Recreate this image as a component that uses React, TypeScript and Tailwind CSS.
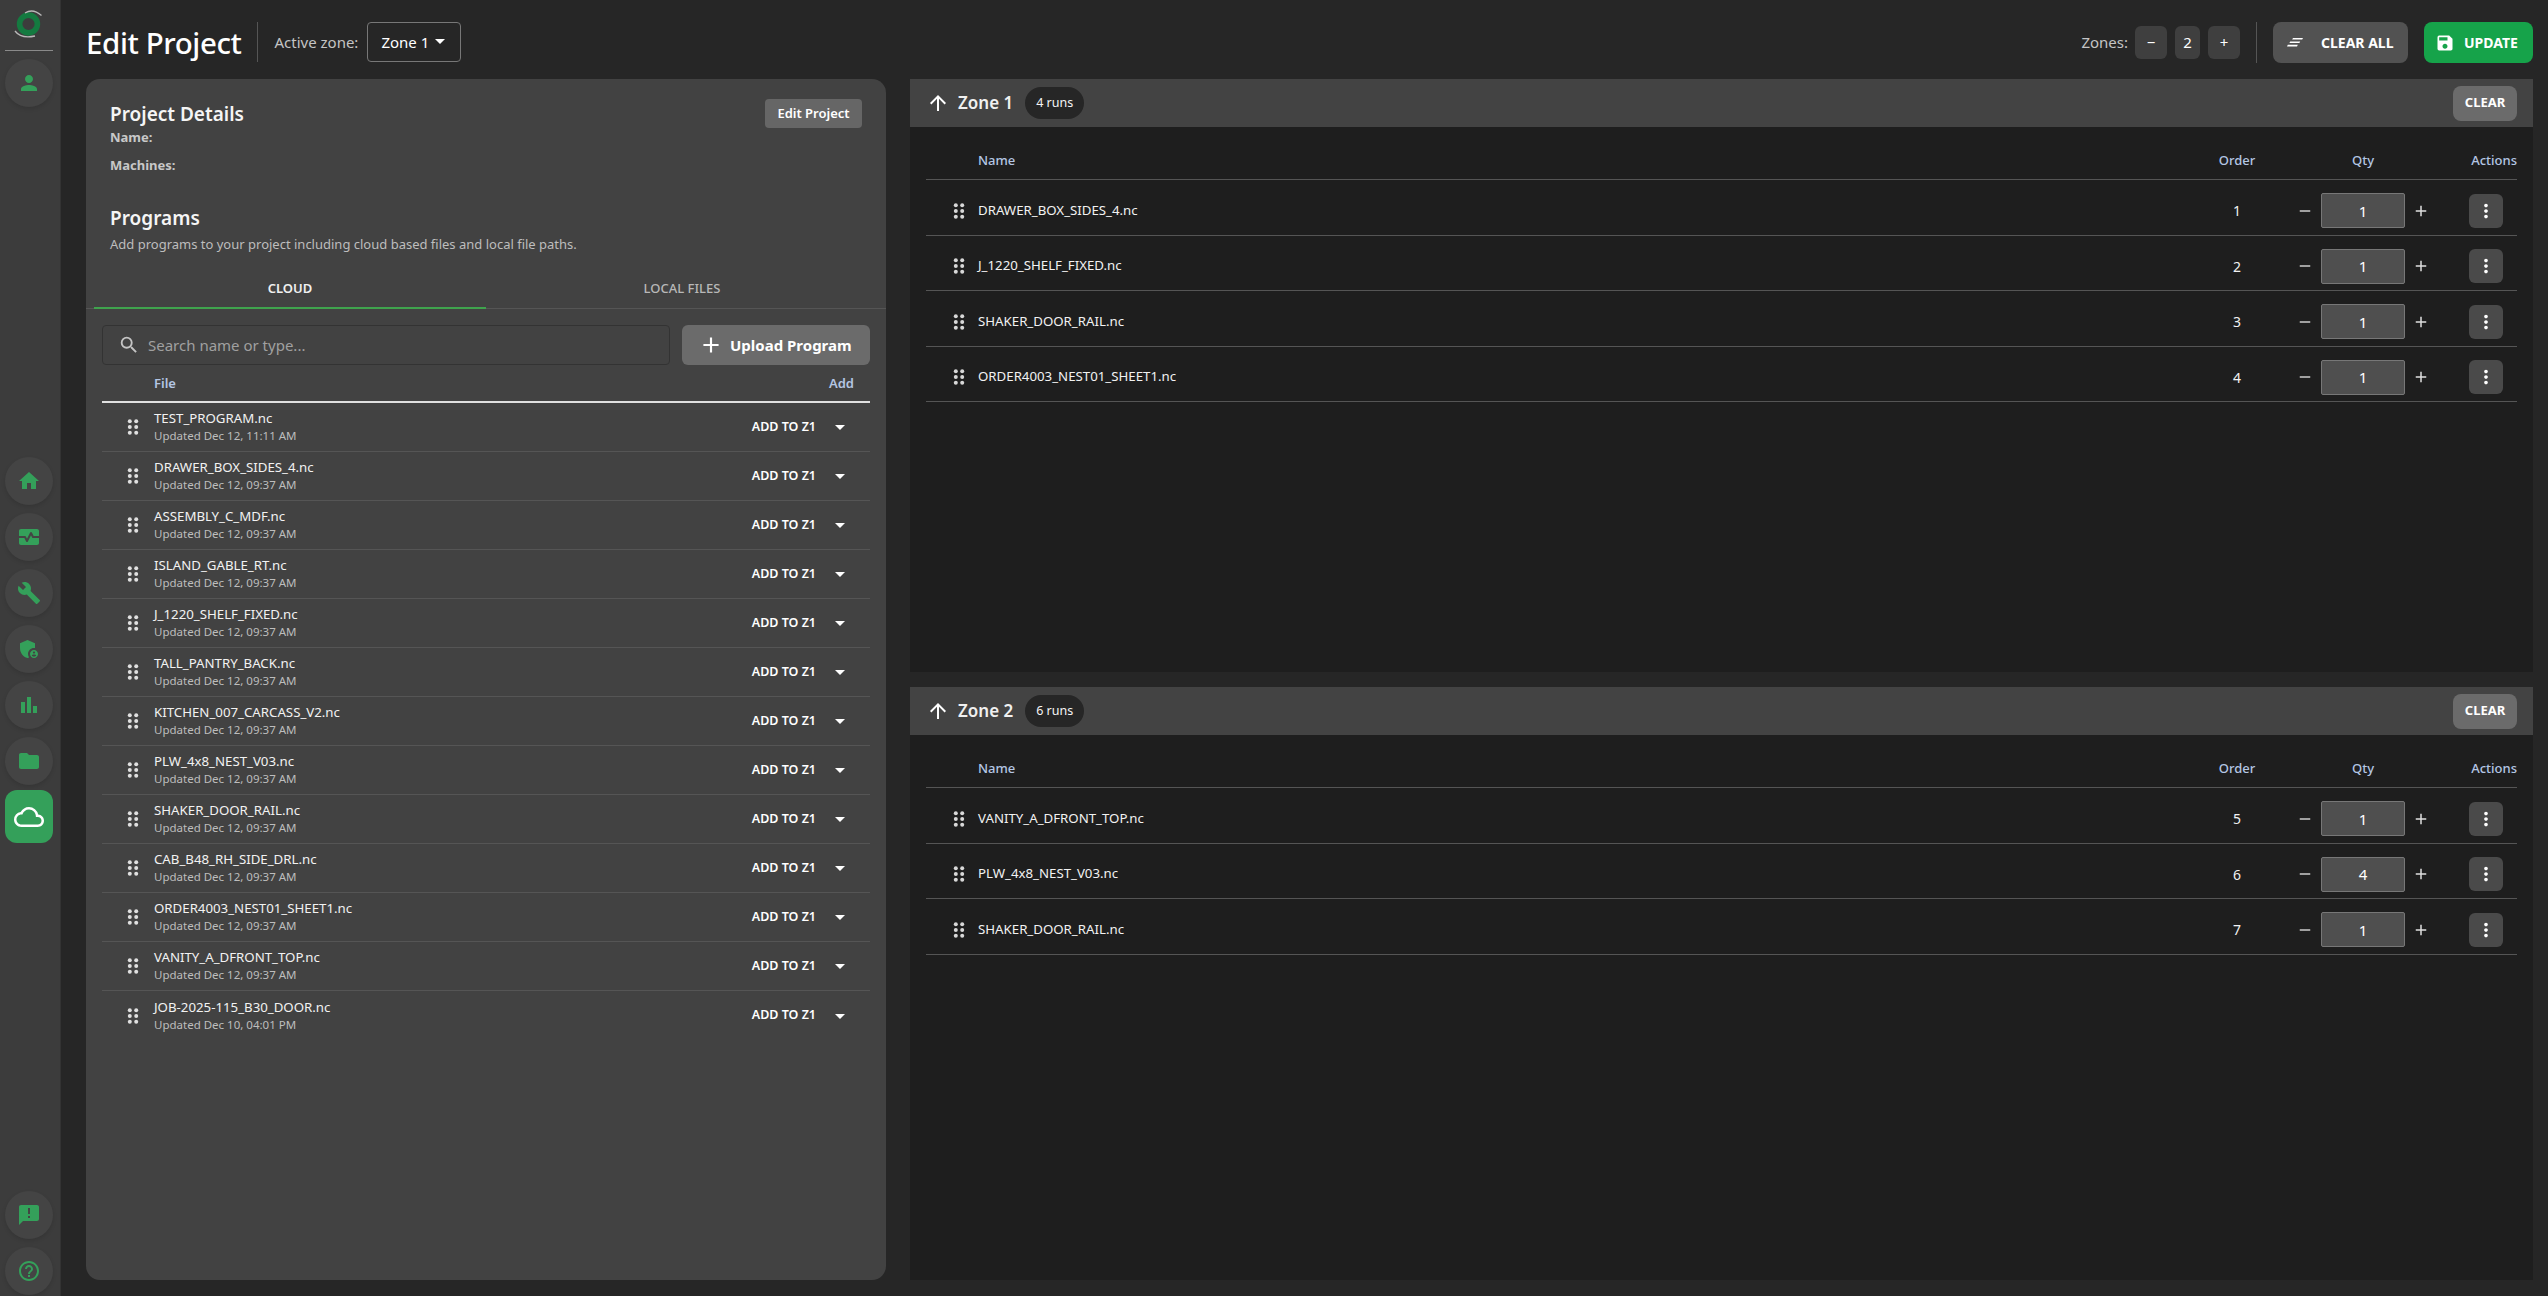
import {
  MdAdd,
  MdAdminPanelSettings,
  MdArrowDropDown,
  MdArrowUpward,
  MdBarChart,
  MdBuild,
  MdCloudQueue,
  MdFolder,
  MdHelpOutline,
  MdHome,
  MdAnnouncement,
  MdMonitorHeart,
  MdMoreVert,
  MdPerson,
  MdRemove,
  MdSave,
  MdSearch,
} from "react-icons/md"
import type { IconType } from "react-icons"

const files = [
  ["TEST_PROGRAM.nc", "Updated Dec 12, 11:11 AM"],
  ["DRAWER_BOX_SIDES_4.nc", "Updated Dec 12, 09:37 AM"],
  ["ASSEMBLY_C_MDF.nc", "Updated Dec 12, 09:37 AM"],
  ["ISLAND_GABLE_RT.nc", "Updated Dec 12, 09:37 AM"],
  ["J_1220_SHELF_FIXED.nc", "Updated Dec 12, 09:37 AM"],
  ["TALL_PANTRY_BACK.nc", "Updated Dec 12, 09:37 AM"],
  ["KITCHEN_007_CARCASS_V2.nc", "Updated Dec 12, 09:37 AM"],
  ["PLW_4x8_NEST_V03.nc", "Updated Dec 12, 09:37 AM"],
  ["SHAKER_DOOR_RAIL.nc", "Updated Dec 12, 09:37 AM"],
  ["CAB_B48_RH_SIDE_DRL.nc", "Updated Dec 12, 09:37 AM"],
  ["ORDER4003_NEST01_SHEET1.nc", "Updated Dec 12, 09:37 AM"],
  ["VANITY_A_DFRONT_TOP.nc", "Updated Dec 12, 09:37 AM"],
  ["JOB-2025-115_B30_DOOR.nc", "Updated Dec 10, 04:01 PM"],
]

const zones = [
  {
    name: "Zone 1",
    runs: "4 runs",
    rows: [
      { name: "DRAWER_BOX_SIDES_4.nc", order: 1, qty: 1 },
      { name: "J_1220_SHELF_FIXED.nc", order: 2, qty: 1 },
      { name: "SHAKER_DOOR_RAIL.nc", order: 3, qty: 1 },
      { name: "ORDER4003_NEST01_SHEET1.nc", order: 4, qty: 1 },
    ],
  },
  {
    name: "Zone 2",
    runs: "6 runs",
    rows: [
      { name: "VANITY_A_DFRONT_TOP.nc", order: 5, qty: 1 },
      { name: "PLW_4x8_NEST_V03.nc", order: 6, qty: 4 },
      { name: "SHAKER_DOOR_RAIL.nc", order: 7, qty: 1 },
    ],
  },
]

const navIcons: IconType[] = [MdHome, MdMonitorHeart, MdBuild, MdAdminPanelSettings, MdBarChart, MdFolder]

function Grip({ className = "" }: { className?: string }) {
  return (
    <svg width="12" height="16" viewBox="0 0 12 16" className={className} fill="currentColor">
      <circle cx="2.8" cy="2.3" r="2" />
      <circle cx="9.2" cy="2.3" r="2" />
      <circle cx="2.8" cy="8" r="2" />
      <circle cx="9.2" cy="8" r="2" />
      <circle cx="2.8" cy="13.7" r="2" />
      <circle cx="9.2" cy="13.7" r="2" />
    </svg>
  )
}

function Logo() {
  return (
    <svg width="30" height="32" viewBox="0 0 30 32" fill="none">
      <circle cx="14.5" cy="16" r="8.9" stroke="#147a40" strokeWidth="5.6" />
      <path d="M11 5 Q19 0 27.5 7.5" stroke="#b8b8b8" strokeWidth="1.3" />
      <path d="M1 23 Q7 31 21 28" stroke="#b8b8b8" strokeWidth="1.3" />
    </svg>
  )
}

function SweepIcon() {
  return (
    <svg width="16" height="9" viewBox="0 0 16 9" fill="currentColor">
      <path d="M6 0h10l-.8 1.6H5.2z" />
      <path d="M3.2 3.4h10l-.8 1.6h-10z" />
      <path d="M.8 6.8h10L10 8.4H0z" />
    </svg>
  )
}

function NavButton({ icon: Icon, size = 24 }: { icon: IconType; size?: number }) {
  return (
    <div className="w-[48px] h-[48px] rounded-full bg-[#444444] flex items-center justify-center text-[#34a05a] shadow-[0_2px_4px_rgba(0,0,0,0.12)]">
      <Icon size={size} />
    </div>
  )
}

function Sidebar() {
  return (
    <aside className="w-[61px] shrink-0 h-full bg-[#3c3c3c] border-r border-[#333333] flex flex-col items-center pr-[2px]">
      <div className="h-[51px] w-[48px] border-b border-[#8a8a8a] flex items-center justify-center pb-[2px]">
        <Logo />
      </div>
      <div className="mt-[8px]">
        <NavButton icon={MdPerson} />
      </div>
      <div className="mt-[350px] flex flex-col gap-[8px]">
        {navIcons.map((icon, i) => (
          <NavButton key={i} icon={icon} />
        ))}
        <div className="w-[48px] h-[53px] -mt-[3px] rounded-[12px] bg-[#34a05a] flex items-center justify-center text-white">
          <MdCloudQueue size={30} />
        </div>
      </div>
      <div className="mt-auto flex flex-col gap-[8px] pb-[1px]">
        <NavButton icon={MdAnnouncement} />
        <NavButton icon={MdHelpOutline} />
      </div>
    </aside>
  )
}

function Header() {
  return (
    <header className="h-[79px] shrink-0 flex items-start pt-[22px]">
      <h1 className="text-[29.5px] leading-[42px] font-medium text-white tracking-[-0.4px]">Edit Project</h1>
      <div className="w-px h-[40px] bg-[#555555] ml-[16px]" />
      <span className="ml-[16px] text-[15px] leading-[40px] text-[#c4c4c4]">Active zone:</span>
      <div className="ml-[9px] w-[94px] h-[40px] border border-[#777777] rounded-[4px] flex items-center pl-[13px] text-[15px] text-white">
        Zone 1
        <MdArrowDropDown size={24} className="-ml-px -mt-[2px]" />
      </div>
      <div className="ml-auto flex items-center h-[41px]">
        <span className="text-[15px] text-[#c4c4c4] mr-[7px]">Zones:</span>
        <div className="w-[32px] h-[33px] rounded-[6px] bg-[#3f3f3f] flex items-center justify-center text-[15px] text-white">−</div>
        <div className="ml-[8px] w-[25px] h-[33px] rounded-[6px] bg-[#3f3f3f] flex items-center justify-center text-[15px] text-white">2</div>
        <div className="ml-[8px] w-[32px] h-[33px] rounded-[6px] bg-[#3f3f3f] flex items-center justify-center text-[15px] text-white">+</div>
        <div className="w-px h-[41px] bg-[#555555] ml-[16px]" />
        <div className="ml-[16px] w-[135px] h-[41px] rounded-[8px] bg-[#525252] flex items-center pl-[14px] text-[14px] font-bold text-white">
          <SweepIcon />
          <span className="ml-[18px]">CLEAR ALL</span>
        </div>
        <div className="ml-[16px] w-[109px] h-[41px] rounded-[8px] bg-[#16a34a] flex items-center pl-[11px] text-[14px] font-bold text-white">
          <MdSave size={20} />
          <span className="ml-[9px]">UPDATE</span>
        </div>
      </div>
    </header>
  )
}

function ProjectPanel() {
  return (
    <section className="w-[800px] shrink-0 h-full rounded-[14px] bg-[#424242] flex flex-col">
      <div className="px-[24px] pt-[20px] relative">
        <h2 className="text-[19px] leading-[30px] font-semibold text-[#f5f5f5]">Project Details</h2>
        <div className="text-[13px] leading-[16px] font-bold text-[#c8c8c8]">Name:</div>
        <div className="mt-[12px] text-[13px] leading-[16px] font-bold text-[#c8c8c8]">Machines:</div>
        <div className="absolute right-[24px] top-[20px] w-[97px] h-[29px] rounded-[4px] bg-[#666666] flex items-center justify-center text-[13px] font-semibold text-white">
          Edit Project
        </div>
        <h2 className="mt-[30px] text-[19px] leading-[30px] font-semibold text-[#f5f5f5]">Programs</h2>
        <p className="mt-[2px] text-[13px] leading-[18px] text-[#bdbdbd]">
          Add programs to your project including cloud based files and local file paths.
        </p>
      </div>
      <div className="mt-[19px] flex px-[8px] border-b border-[#555555] text-[13px] font-semibold">
        <div className="w-[392px] h-[37px] flex items-center justify-center text-[#f0f0f0] border-b-2 border-[#3fa34d] -mb-px pb-[2px]">CLOUD</div>
        <div className="w-[392px] h-[36px] flex items-center justify-center text-[#b8b8b8] font-medium pb-[2px]">LOCAL FILES</div>
      </div>
      <div className="px-[16px] pt-[16px]">
        <div className="flex gap-[12px]">
          <div className="flex-1 h-[40px] rounded-[4px] border border-[#333333] flex items-center pl-[15px] text-[#a0a0a0] text-[15px]">
            <MdSearch size={22} className="text-[#c4c4c4]" />
            <span className="ml-[8px]">Search name or type...</span>
          </div>
          <div className="w-[188px] h-[40px] rounded-[6px] bg-[#6b6b6b] flex items-center pl-[16px] text-[15px] font-bold text-white">
            <MdAdd size={26} />
            <span className="ml-[6px]">Upload Program</span>
          </div>
        </div>
        <div className="h-[38px] pt-[2px] flex items-center justify-between border-b-2 border-[#e0e0e0] px-[52px] pr-[16px] text-[13px] font-semibold text-[#b4c6e4]">
          <span>File</span>
          <span>Add</span>
        </div>
        {files.map(([name, date], i) => (
          <div key={name} className={`h-[49px] flex items-center ${i < files.length - 1 ? "border-b border-[#555555]" : ""}`}>
            <Grip className="ml-[25px] text-[#e0e0e0]" />
            <div className="ml-[15px] flex-1 min-w-0">
              <div className="text-[13.25px] leading-[18px] text-[#f2f2f2]">{name}</div>
              <div className="text-[11.5px] leading-[18px] text-[#bdbdbd]">{date}</div>
            </div>
            <span className="text-[12.5px] font-semibold text-white">ADD TO Z1</span>
            <MdArrowDropDown size={24} className="ml-[12px] mr-[18px] text-white" />
          </div>
        ))}
      </div>
    </section>
  )
}

function ZoneCard({ zone }: { zone: (typeof zones)[number] }) {
  return (
    <section className="flex-1 min-h-0 bg-[#1e1e1e] flex flex-col">
      <div className="h-[48px] shrink-0 bg-[#434343] flex items-center pl-[16px] pr-[16px]">
        <MdArrowUpward size={24} className="text-white" />
        <span className="ml-[8px] text-[17px] font-semibold text-[#f0f0f0]">{zone.name}</span>
        <span className="ml-[12px] h-[32px] px-[11px] rounded-full bg-[#262626] flex items-center text-[12.5px] text-[#f5f5f5]">{zone.runs}</span>
        <div className="ml-auto w-[64px] h-[35px] rounded-[8px] bg-[#6b6b6b] flex items-center justify-center text-[13px] font-bold text-white">CLEAR</div>
      </div>
      <div className="px-[16px]">
        <div className="h-[53px] pt-[16px] grid grid-cols-[52px_1fr_100px_152px_78px] items-center border-b border-[#555555] text-[13px] font-medium text-[#b4c6e4]">
          <span />
          <span>Name</span>
          <span className="text-center">Order</span>
          <span className="text-center">Qty</span>
          <span className="text-right">Actions</span>
        </div>
        {zone.rows.map((row) => (
          <div key={row.order} className="h-[55.5px] pt-[7px] grid grid-cols-[52px_1fr_100px_152px_78px] items-center border-b border-[#555555] text-[14px] text-[#f2f2f2]">
            <Grip className="ml-[27px] text-[#d8d8d8]" />
            <span className="text-[13.25px]">{row.name}</span>
            <span className="text-center">{row.order}</span>
            <div className="flex items-center justify-center">
              <MdRemove size={18} className="text-[#cccccc]" />
              <div className="mx-[7px] w-[84px] h-[35px] rounded-[2px] bg-[#4f4f4f] border border-[#777777] flex items-center justify-center text-[15px] text-white">{row.qty}</div>
              <MdAdd size={18} className="text-[#e0e0e0]" />
            </div>
            <div className="ml-auto mr-[14px] w-[34px] h-[34px] rounded-[6px] bg-[#4a4a4a] flex items-center justify-center text-white">
              <MdMoreVert size={22} />
            </div>
          </div>
        ))}
      </div>
    </section>
  )
}

export default function App() {
  return (
    <div className="w-[2548px] h-[1296px] flex bg-[#262626] overflow-hidden font-['Noto_Sans',sans-serif]">
      <Sidebar />
      <main className="flex-1 min-w-0 flex flex-col pl-[25px] pr-[15px] pb-[16px]">
        <Header />
        <div className="flex-1 min-h-0 flex gap-[24px]">
          <ProjectPanel />
          <div className="flex-1 min-w-0 flex flex-col gap-[15px]">
            {zones.map((zone) => (
              <ZoneCard key={zone.name} zone={zone} />
            ))}
          </div>
        </div>
      </main>
    </div>
  )
}
